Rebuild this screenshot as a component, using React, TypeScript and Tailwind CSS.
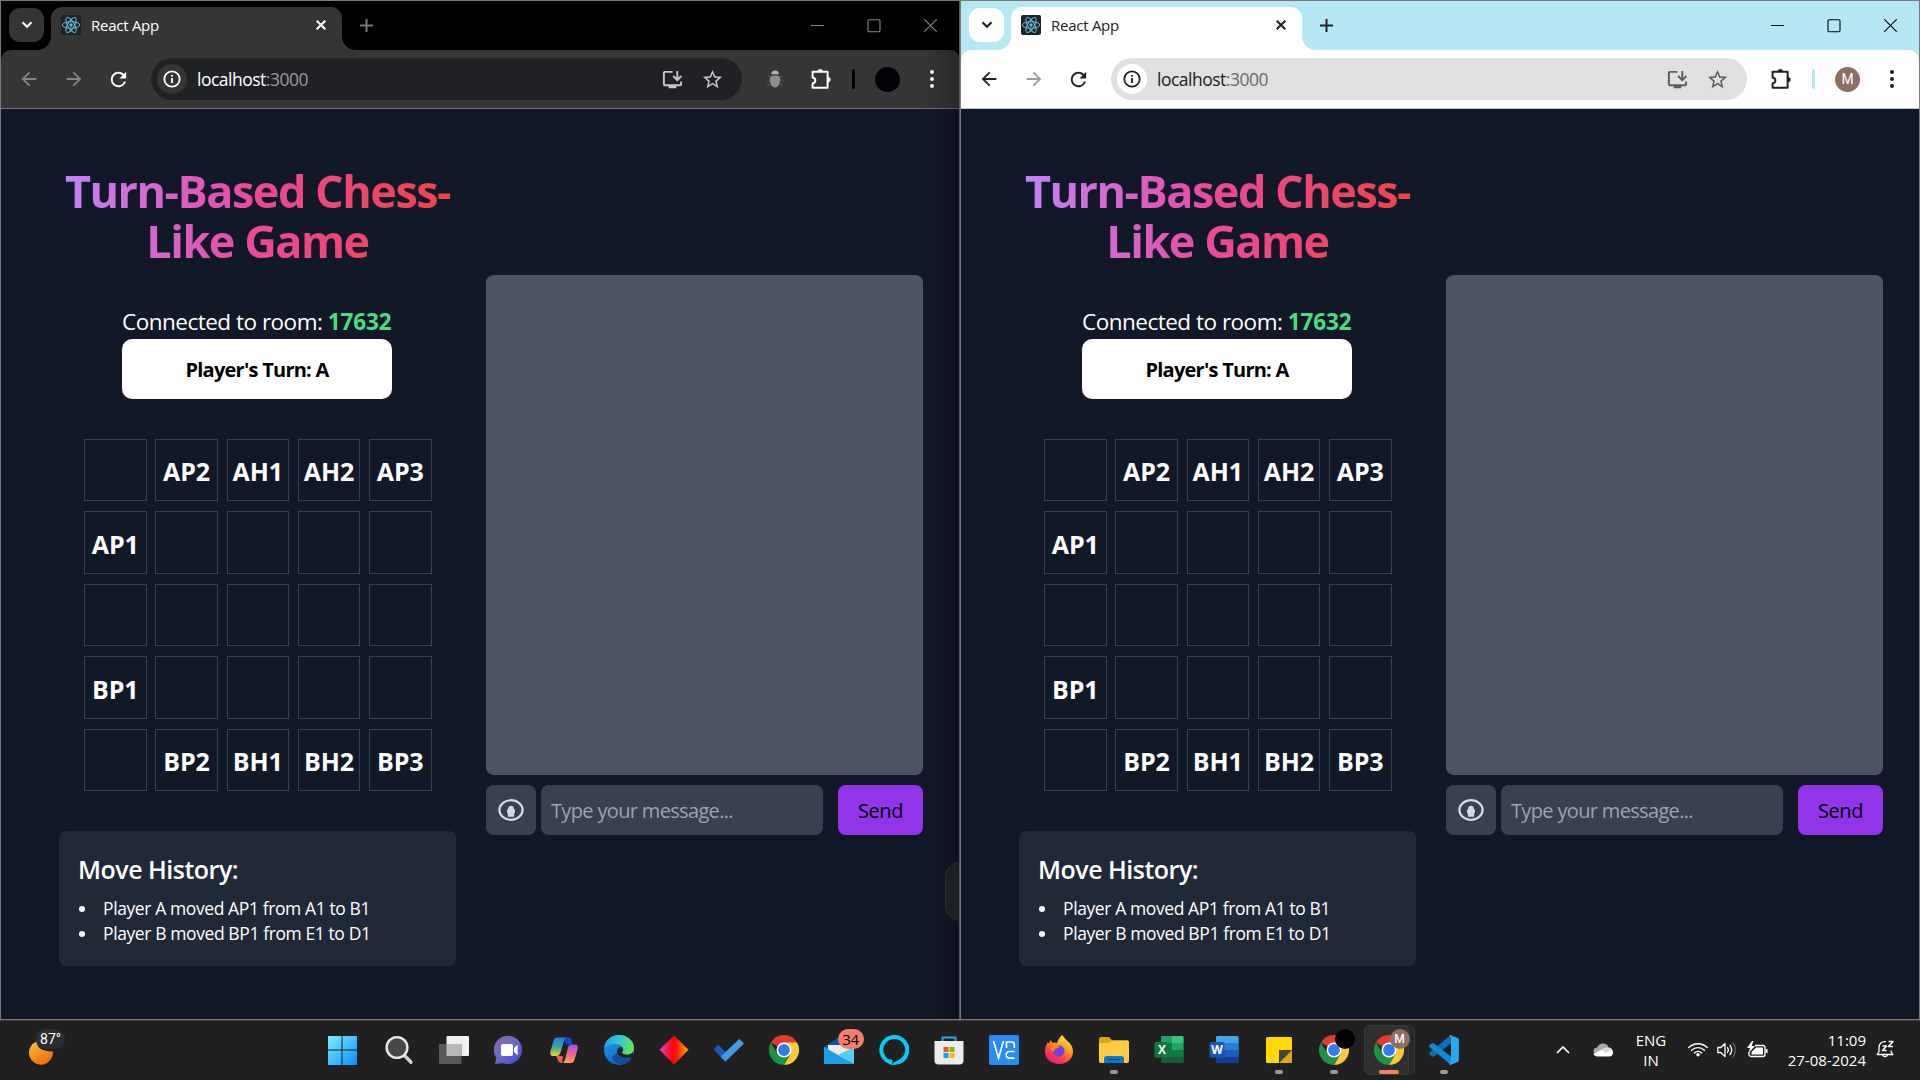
import React from "react";
import { MdInstallDesktop, MdStarBorder, MdRefresh, MdArrowBack, MdArrowForward } from "react-icons/md";

type Theme = "dark" | "light";

/* ---------- browser chrome ---------- */

function ReactLogo() {
  return (
    <svg viewBox="0 0 20 20" className="h-5 w-5 shrink-0">
      <rect width="20" height="20" rx="2" fill="#20232a" />
      <g fill="none" stroke="#61c5dd" strokeWidth="0.95">
        <ellipse cx="10" cy="10" rx="8.6" ry="3.3" />
        <ellipse cx="10" cy="10" rx="8.6" ry="3.3" transform="rotate(60 10 10)" />
        <ellipse cx="10" cy="10" rx="8.6" ry="3.3" transform="rotate(120 10 10)" />
      </g>
      <circle cx="10" cy="10" r="1.7" fill="#61c5dd" />
    </svg>
  );
}

function PuzzleIcon() {
  return (
    <svg viewBox="0 0 24 24" className="h-6 w-6">
      <path
        d="M4.6 4.8h15v16H4.6v-4.3c3.4-.6 3.9-5.2 0-6z"
        fill="none"
        stroke="currentColor"
        strokeWidth="2"
        strokeLinejoin="round"
      />
      <path d="M9.6 4.5a2.6 2.6 0 0 1 5.2 0zM20 9.9a2.6 2.6 0 0 1 0 5.2z" fill="currentColor" />
    </svg>
  );
}

function BugIcon() {
  return (
    <svg viewBox="0 0 20 20" className="h-5 w-5">
      <g stroke="#505050" strokeWidth="1.2" fill="none">
        <path d="M5 8 2.5 6.5M5 12H1.5M5 15l-2.5 2M15 8l2.5-1.5M15 12h3.5M15 15l2.500 2" />
      </g>
      <path d="M6.400 5.200a3.700 3.700 0 0 1 7.400 0z" fill="#b5b5b5" />
      <path d="M4.800 9.500C4.800 7.200 7 6.500 10 6.500s5.300.7 5.300 3c0 5-2 9-5.300 9s-5.200-4-5.200-9z" fill="#8e8e8e" />
    </svg>
  );
}

function Flare({ side, className }: { side: "left" | "right"; className: string }) {
  return (
    <svg
      viewBox="0 0 14 14"
      className={`absolute bottom-0 h-3.5 w-3.5 ${side === "left" ? "-left-3.5" : "-right-3.5"} ${className}`}
    >
      <path d={side === "left" ? "M14 0v14H0C8 14 14 8 14 0z" : "M0 0v14h14C6 14 0 8 0 0z"} fill="currentColor" />
    </svg>
  );
}

function TabStrip({ theme }: { theme: Theme }) {
  const dark = theme === "dark";
  const surface = dark ? "bg-[#353535]" : "bg-white";
  const surfaceText = dark ? "text-[#353535]" : "text-white";
  return (
    <div className={`flex h-[49px] shrink-0 ${dark ? "bg-black" : "bg-[#b6e8f3]"}`}>
      <div className={`mt-[7px] ml-2 flex h-[34px] w-[35px] items-center justify-center rounded-[11px] ${surface}`}>
        <svg viewBox="0 0 12 8" className={`h-2 w-3 ${dark ? "text-white" : "text-[#202124]"}`}>
          <path d="M1.5 1.2 6 5.7l4.5-4.5" fill="none" stroke="currentColor" strokeWidth="2.2" />
        </svg>
      </div>
      <div className={`relative mt-1.5 ml-[7px] flex w-[291px] items-center rounded-t-[11px] pr-4 pb-[7px] pl-2.5 ${surface}`}>
        <Flare side="left" className={surfaceText} />
        <Flare side="right" className={surfaceText} />
        <ReactLogo />
        <span className={`ml-2.5 flex-1 text-[15px] leading-5 tracking-[-0.26px] ${dark ? "text-white" : "text-[#202124]"}`}>
          React App
        </span>
        <svg viewBox="0 0 10 10" className={`h-2.5 w-2.5 ${dark ? "text-white" : "text-[#202124]"}`}>
          <path d="m.7.7 8.6 8.6m0-8.6L.7 9.3" stroke="currentColor" strokeWidth="2" />
        </svg>
      </div>
      <svg
        viewBox="0 0 13 13"
        className={`mt-[18px] ml-[18px] h-[13px] w-[13px] ${dark ? "text-[#777777]" : "text-[#202124]"}`}
      >
        <path d="M6.5 0v13M0 6.5h13" stroke="currentColor" strokeWidth="2" />
      </svg>
      <div className={`mt-[18px] ml-auto flex gap-[43px] ${dark ? "mr-[23px] text-[#8a8a8a]" : "mr-[22px] text-black"}`}>
        <svg viewBox="0 0 13 13" className="h-[13px] w-[13px]">
          <path d="M0 6.5h13" stroke="currentColor" strokeWidth="1" />
        </svg>
        <svg viewBox="0 0 14 14" className="h-3.5 w-3.5">
          <rect x="1" y="0.8" width="12" height="12" rx="1.2" fill="none" stroke="currentColor" strokeWidth="1.1" />
        </svg>
        <svg viewBox="0 0 13 13" className="h-[13px] w-[13px]">
          <path d="m.3.3 12.4 12.4m0-12.4L.3 12.7" stroke="currentColor" strokeWidth="1.1" />
        </svg>
      </div>
    </div>
  );
}

function Toolbar({ theme }: { theme: Theme }) {
  const dark = theme === "dark";
  const ink = dark ? "text-white" : "text-[#202124]";
  return (
    <div className={`shrink-0 ${dark ? "bg-black" : "bg-[#b6e8f3]"}`}>
      <div
        className={`flex h-[59px] items-center rounded-t-[10px] border-b pl-[17px] ${
          dark ? "border-[#747474] bg-[#353535] pr-[18px]" : "border-[#b9c3c5] bg-white pr-[17px]"
        }`}
      >
        <MdArrowBack className={`h-[22px] w-[22px] ${dark ? "text-[#868686]" : "text-[#202124]"}`} />
        <MdArrowForward className={`ml-[23px] h-[22px] w-[22px] ${dark ? "text-[#868686]" : "text-[#9b9b9b]"}`} />
        <MdRefresh className={`ml-[22px] h-[23px] w-[23px] ${ink}`} />
        <div
          className={`ml-[21px] flex h-[42px] items-center rounded-full pr-[18px] pl-[6px] ${
            dark ? "w-[591px] bg-[#202124]" : "w-[636px] bg-[#e0e0e0]"
          }`}
        >
          <div className={`flex h-[30px] w-[30px] items-center justify-center rounded-full ${dark ? "bg-[#353535]" : "bg-white"}`}>
            <svg viewBox="0 0 18 18" className={`h-[18px] w-[18px] ${ink}`}>
              <circle cx="9" cy="9" r="7.7" fill="none" stroke="currentColor" strokeWidth="1.8" />
              <path d="M9 8v5M9 5v1.7" stroke="currentColor" strokeWidth="1.8" />
            </svg>
          </div>
          <span
            className={`ml-2.5 flex-1 text-[17.5px] leading-6 tracking-[-0.5px] ${
              dark ? "text-[#9a9b9d]" : "text-[#6a6a6a]"
            }`}
          >
            <span className={ink}>localhost</span>:3000
          </span>
          <MdInstallDesktop className={`h-[23px] w-[23px] ${dark ? "text-[#c7c7c7]" : "text-[#5b5d60]"}`} />
          <MdStarBorder className={`ml-[17px] h-[23px] w-[23px] ${dark ? "text-[#c7c7c7]" : "text-[#5b5d60]"}`} />
        </div>
        <div className={`ml-auto flex items-center ${ink}`}>
          {dark && (
            <span className="mr-[23px]">
              <BugIcon />
            </span>
          )}
          <PuzzleIcon />
          <span className={`ml-5 h-5 w-[3px] rounded-full ${dark ? "bg-black" : "bg-[#b6e8f3]"}`} />
          <span
            className={`ml-5 flex h-[25px] w-[25px] items-center justify-center rounded-full font-[Roboto] text-sm text-white ${
              dark ? "bg-[#040007]" : "bg-[#8d6e63]"
            }`}
          >
            {dark ? "" : "M"}
          </span>
          <svg viewBox="0 0 20 20" className="ml-[22px] h-5 w-5">
            <circle cx="10" cy="3" r="2" fill="currentColor" />
            <circle cx="10" cy="10" r="2" fill="currentColor" />
            <circle cx="10" cy="17" r="2" fill="currentColor" />
          </svg>
        </div>
      </div>
    </div>
  );
}

/* ---------- game page ---------- */

const board = [
  ["", "AP2", "AH1", "AH2", "AP3"],
  ["AP1", "", "", "", ""],
  ["", "", "", "", ""],
  ["BP1", "", "", "", ""],
  ["", "BP2", "BH1", "BH2", "BP3"],
];

const moves = ["Player A moved AP1 from A1 to B1", "Player B moved BP1 from E1 to D1"];

function GamePanel() {
  return (
    <div className="w-[397px]">
      <h1 className="bg-[linear-gradient(to_right,#c084fc,#ec4899,#ef4444)] bg-clip-text pt-[2px] text-center text-[45px] leading-[50px] font-bold tracking-[-1.5px] text-transparent">
        Turn-Based Chess-
        <br />
        Like Game
      </h1>
      <div className="mt-[38px] ml-[63px] w-[270px]">
        <p className="text-[22.5px] leading-[35px] tracking-[-0.5px] whitespace-nowrap text-white">
          Connected to room: <span className="font-bold tracking-[-0.12px] text-[#4ade80]">17632</span>
        </p>
        <div className="flex h-[60px] items-center justify-center rounded-[10px] bg-white pt-[2px] text-xl font-bold tracking-[-0.75px] text-black">
          Player's Turn: A
        </div>
      </div>
      <div className="mt-[39.75px] ml-[25px] grid w-max grid-cols-5 gap-x-[8.75px] gap-y-2.5">
        {board.flat().map((piece, i) => (
          <div
            key={i}
            className="flex h-[62.5px] w-[62.5px] items-center justify-center border border-[#374151] pt-[3px] text-[25px] leading-[35px] font-bold tracking-[-0.1px] text-white"
          >
            {piece}
          </div>
        ))}
      </div>
      <div className="mt-10 h-[135px] rounded-[7.5px] bg-[#1f2937] pt-5 pl-[19px] text-white">
        <h2 className="text-[25px] leading-[37px] font-semibold tracking-[-0.5px]">Move History:</h2>
        <ul className="mt-2 ml-px">
          {moves.map((move) => (
            <li key={move} className="flex items-center text-[17.5px] leading-[25px] tracking-[-0.4px]">
              <span className="mr-[18px] h-1.5 w-1.5 rounded-full bg-white" />
              {move}
            </li>
          ))}
        </ul>
      </div>
    </div>
  );
}

function ChatPanel() {
  return (
    <div className="mt-[111px] w-[437px]">
      <div className="h-[500px] rounded-[7.5px] bg-[#4b5563]" />
      <div className="mt-2.5 flex h-[50px]">
        <div className="flex w-[50px] items-center justify-center rounded-[7.5px] bg-[#374151]">
          <svg viewBox="0 0 26 22" className="h-[22px] w-[26px]">
            <ellipse cx="13" cy="11" rx="11.6" ry="9.8" fill="none" stroke="#d6dae0" strokeWidth="2.2" />
            <path
              d="M13 6.8c1.7 0 2.7 1.3 2.9 2.9 1 .8 1.4 2 1.1 3.2-.2.9-.8 1.4-.9 2.2v2.7h-6.2v-2.7c-.1-.8-.7-1.3-.9-2.2-.3-1.2.1-2.4 1.1-3.2.2-1.6 1.2-2.9 2.9-2.9z"
              fill="#d6dae0"
            />
          </svg>
        </div>
        <div className="ml-[5px] flex w-[282px] items-center rounded-[7.5px] bg-[#374151] pt-[2px] pl-2.5 text-xl tracking-[-0.66px] text-[#9ca3af]">
          Type your message...
        </div>
        <div className="ml-[15px] flex w-[85px] items-center justify-center rounded-[7.5px] bg-[#9333ea] pt-[2px] text-xl tracking-[-0.45px] text-black shadow-md">
          Send
        </div>
      </div>
    </div>
  );
}

function BrowserWindow({ theme }: { theme: Theme }) {
  const dark = theme === "dark";
  return (
    <div
      className={`relative flex h-[1020px] w-[960px] flex-col overflow-hidden border-t border-b border-l border-[#7a7a7a] ${
        dark ? "" : "border-r"
      }`}
    >
      <TabStrip theme={theme} />
      <Toolbar theme={theme} />
      <div className="flex flex-1 gap-[30px] bg-[#111827] pt-[55px] pl-[58px]">
        <GamePanel />
        <ChatPanel />
      </div>
      {dark && (
        <>
          <div className="absolute right-0 bottom-[98px] h-[59px] w-[15px] rounded-l-[20px] border border-r-0 border-[#33383d] bg-[#22272b]" />
          <div className="absolute top-[49px] right-0 bottom-0 w-9 bg-gradient-to-l from-black/25 to-transparent" />
          <div className="absolute top-0 right-0 bottom-0 w-px bg-[#55585e]" />
        </>
      )}
    </div>
  );
}

/* ---------- taskbar icons ---------- */

function Icon({ children, className = "" }: { children: React.ReactNode; className?: string }) {
  return (
    <svg viewBox="0 0 30 30" className={`h-[30px] w-[30px] ${className}`}>
      {children}
    </svg>
  );
}

function StartIcon() {
  return (
    <Icon className="mr-1">
      <defs>
        <linearGradient id="start" x1="0" y1="0" x2="30" y2="30" gradientUnits="userSpaceOnUse">
          <stop offset="0" stopColor="#82f3fb" />
          <stop offset="1" stopColor="#0a8dfa" />
        </linearGradient>
      </defs>
      <path d="M1 1h13.500v13.500H1zM15.500 1H30v13.500H15.500zM1 15.500h13.500V30H1zM15.500 15.500H30V30H15.500z" fill="url(#start)" />
    </Icon>
  );
}

function SearchIcon() {
  return (
    <Icon className="mr-px">
      <path d="m20 20 7 7.3" stroke="#cfd3d6" strokeWidth="3.4" strokeLinecap="round" />
      <circle cx="13" cy="12.5" r="10.4" fill="#484848" stroke="#e6eaec" strokeWidth="2.4" />
    </Icon>
  );
}

function TaskViewIcon() {
  return (
    <Icon>
      <rect x="7.5" y="1" width="22.5" height="20" rx="1" fill="#f0f0f0" />
      <rect x="0" y="9" width="22.5" height="20" rx="1" fill="#595959" />
      <path d="M7.500 9h15v12h-15z" fill="#b9b9b9" />
    </Icon>
  );
}

function ChatIcon() {
  return (
    <Icon>
      <defs>
        <linearGradient id="chat" x1="0.1" y1="0.1" x2="0.8" y2="0.9">
          <stop offset="0" stopColor="#8a66a8" />
          <stop offset="0.45" stopColor="#6c6cc8" />
          <stop offset="1" stopColor="#4f4fd0" />
        </linearGradient>
      </defs>
      <path d="M15 .7A14.200 14.200 0 1 1 9 28.200L1 29l1.300-6.200A14.200 14.200 0 0 1 15 .7z" fill="url(#chat)" />
      <rect x="7" y="9" width="12" height="12" rx="1.800" fill="#fff" />
      <path d="m20 13 3.600-3.200v10.400L20 17z" fill="#fff" />
    </Icon>
  );
}

function CopilotIcon() {
  return (
    <Icon>
      <defs>
        <linearGradient id="cpA" x1="0" y1="0" x2="0" y2="1">
          <stop offset="0" stopColor="#1f7fe0" />
          <stop offset="0.5" stopColor="#35a9a0" />
          <stop offset="1" stopColor="#e8d322" />
        </linearGradient>
        <linearGradient id="cpB" x1="0" y1="0" x2="0" y2="1">
          <stop offset="0" stopColor="#a04df0" />
          <stop offset="0.5" stopColor="#ee5f91" />
          <stop offset="1" stopColor="#ffa24f" />
        </linearGradient>
      </defs>
      <path d="M14 2.500h5.500c2 0 2.500 1.500 3 3l1.200 4H17z" fill="#1747c4" />
      <path d="M7 21h7l-1 7c-2 0-3.500-.8-4.200-3z" fill="#f2603c" />
      <path d="M8 2.500h10.500c-2 0-2.800 1.300-3.300 3L11.300 18c-.6 2-1.800 3-3.800 3H4.300C1.500 21 .7 19 1.400 16.500L4.500 6C5.200 3.700 6 2.500 8 2.500z" fill="url(#cpA)" />
      <path d="M22 28H12.500c2 0 2.800-1.300 3.300-3L19 12.500c.6-2 1.800-3 3.800-3h2.900c2.800 0 3.600 2 2.900 4.500l-3 10.500C24.800 26.800 24 28 22 28z" fill="url(#cpB)" />
    </Icon>
  );
}

function EdgeIcon() {
  return (
    <Icon>
      <defs>
        <linearGradient id="edgeTop" x1="0" y1="0.3" x2="1" y2="0.6">
          <stop offset="0" stopColor="#1fa4e8" />
          <stop offset="0.5" stopColor="#35c8cf" />
          <stop offset="1" stopColor="#6be34f" />
        </linearGradient>
        <linearGradient id="edgeBody" x1="0" y1="0" x2="0.4" y2="1">
          <stop offset="0" stopColor="#1fa7e6" />
          <stop offset="1" stopColor="#0b66d0" />
        </linearGradient>
      </defs>
      <circle cx="15" cy="15" r="15" fill="url(#edgeBody)" />
      <path d="M8 22c1 5 7 8 12 7.200 3.500-.7 6.500-3.500 8-6.200.3-.6-.2-1-.8-.6-5 2.500-13 1-14.200-5z" fill="#114b9a" />
      <path d="M0 13C1 5 7.500 0 15 0c8.500 0 15 6 15 12.500 0 4.200-3 7.300-7 7.300-3 0-5-1-5-2.200 0-.8 1.200-1.200 1.200-3.200 0-2.600-3-5.400-7.500-5.400C6.500 9 2 11 0 13z" fill="url(#edgeTop)" />
      <path d="M18 17.600c0 1.200 2 2.200 5 2.200 2.500 0 4.300-.8 5.400-2.200L31 24l-6-1.500c-6 1.500-12-1.500-12-6 0-2 1.200-4.200 3.400-4.600 1.800 0 2.800 1 2.800 2.500 0 2-1.200 2.400-1.200 3.200z" fill="#202020" />
    </Icon>
  );
}

function DiamondIcon() {
  return (
    <Icon>
      <defs>
        <linearGradient id="diamond" x1="0" y1="0" x2="1" y2="0">
          <stop offset="0" stopColor="#f33bd0" />
          <stop offset="0.45" stopColor="#fb0505" />
          <stop offset="0.6" stopColor="#fb1a05" />
          <stop offset="1" stopColor="#ffb300" />
        </linearGradient>
      </defs>
      <path d="m15 .5 14.500 14.300L15 29.500.5 14.800z" fill="url(#diamond)" />
    </Icon>
  );
}

function TodoIcon() {
  return (
    <Icon>
      <path d="m0 14.500 4.200-4.300 11 11-4.300 4.300z" fill="#1f56b8" stroke="#1f56b8" strokeLinejoin="round" />
      <path d="M25.500 4.300 29.500 8.600 11.500 26 7 21.700z" fill="#3f9bea" stroke="#3f9bea" strokeLinejoin="round" />
    </Icon>
  );
}

function ChromeIcon() {
  return (
    <Icon>
      <path d="M15 15 2 7.500A15 15 0 0 1 28 7.500z" fill="#e33b2e" />
      <path d="M15 15V7.500h13A15 15 0 0 1 15 30l6.500-11.200z" fill="#fcc934" />
      <path d="M15 15l6.500 3.800L15 30A15 15 0 0 1 2 7.500l6.500 11.300z" fill="#1e9143" />
      <circle cx="15" cy="15" r="7.500" fill="#fff" />
      <circle cx="15" cy="15" r="5.900" fill="#2f7cf0" />
    </Icon>
  );
}

function MailIcon() {
  return (
    <Icon>
      <path d="M0 12 15 2l15 10v4H0z" fill="#0a57a5" />
      <path d="M4 10h22v10H4z" fill="#ececec" />
      <path d="M0 12v17h30z" fill="#2aa7e6" />
      <path d="M30 12v17L13 20.500z" fill="#4fd1f7" />
      <path d="M0 12v17h30L15 21z" fill="#219be2" />
    </Icon>
  );
}

function AlexaIcon() {
  return (
    <Icon>
      <path d="M12.800 27.500A12.900 12.900 0 1 1 19 27.200" fill="none" stroke="#05cbfb" strokeWidth="4" />
      <path d="M13.500 30v-3.600c0-1.200-.7-1.800-2-2.300L9 26l1.500 3.300zM13.500 30c7 0 12-3 15-8l-4.500-1c-2 3.500-5.500 5-9 6z" fill="#05cbfb" />
    </Icon>
  );
}

function StoreIcon() {
  return (
    <Icon>
      <path d="M8.500 8V2.500h13V8" fill="none" stroke="#2ba6e6" strokeWidth="2" />
      <path d="M.5 6h29v19.500a4 4 0 0 1-4 4h-21a4 4 0 0 1-4-4z" fill="#ececec" />
      <path d="M9.500 12H14.500V17H9.500z" fill="#f25022" />
      <path d="M15.500 12H20.500V17H15.500z" fill="#7fba00" />
      <path d="M9.500 18H14.500V23H9.500z" fill="#00a4ef" />
      <path d="M15.500 18H20.500V23H15.500z" fill="#ffb900" />
    </Icon>
  );
}

function VncIcon() {
  return (
    <Icon>
      <rect width="30" height="30" rx="2" fill="#278cf4" />
      <g fill="none" stroke="#fff" strokeWidth="1.700">
        <path d="M4.500 6 9.500 23 14.500 6" />
        <path d="M17.500 13V7h5c2 0 2.800 1 2.800 2.600V13" />
        <path d="M25.500 16.500h-5a3.200 3.200 0 0 0 0 6.700h5" />
      </g>
    </Icon>
  );
}

function FirefoxIcon() {
  return (
    <Icon>
      <defs>
        <linearGradient id="fox" x1="0.8" y1="0" x2="0.2" y2="1">
          <stop offset="0" stopColor="#fff04a" />
          <stop offset="0.4" stopColor="#ff9a1f" />
          <stop offset="0.7" stopColor="#ff3b4c" />
          <stop offset="1" stopColor="#e31587" />
        </linearGradient>
      </defs>
      <path d="M18 0c2 2 3 4 5.500 6 3 2.500 5.500 6 5.500 10.500C29 24 23 29 15.500 29 7 29 1 24 1 16.500c0-4 1-7 3-9.500l.8 2L6.500 5l2 3c2-.7 3.500-.4 4.500 0C14 5 15.500 2.500 18 0z" fill="url(#fox)" />
      <circle cx="14.800" cy="16" r="5.800" fill="#7542e5" />
      <path d="M6 11c3-1.500 8-1.500 10 1-2 0-2.500 1.500-4.500 1.700-1.500.2-1.500 2-.5 3.300-3-1-5.500-3-5-6z" fill="#ff8a16" />
    </Icon>
  );
}

function ExplorerIcon() {
  return (
    <Icon>
      <path d="M0 4a2 2 0 0 1 2-2h8l3.500 3.500H28a2 2 0 0 1 2 2V12H0z" fill="#e2a30c" />
      <path d="M0 8h10l3-2.500h15.500A1.500 1.500 0 0 1 30 7v19a2 2 0 0 1-2 2H2a2 2 0 0 1-2-2z" fill="#fdcb44" />
      <path d="M5 28v-4a3 3 0 0 1 3-3h14a3 3 0 0 1 3 3v4z" fill="#0f79d2" />
      <path d="M9 24.500h12" stroke="#0a4c93" strokeWidth="1.200" />
    </Icon>
  );
}

function OfficeIcon({ letter }: { letter: "X" | "W" }) {
  const c =
    letter === "X"
      ? ["#21a366", "#33c481", "#107c41", "#21a366", "#185c37", "#107c41"]
      : ["#41a5ee", "#41a5ee", "#2b7cd3", "#2b7cd3", "#103f91", "#1a5dbe"];
  return (
    <div className="relative h-[30px] w-[30px]">
      <Icon>
        <rect x="7" y="1" width="22.500" height="27" rx="1.500" fill={c[2]} />
        <path d="M7 2.500A1.500 1.500 0 0 1 8.500 1H18v7H7z" fill={c[0]} />
        <path d="M18 1h10a1.500 1.500 0 0 1 1.500 1.500V8H18z" fill={c[1]} />
        <path d="M18 8h11.500v7H18z" fill={c[3]} />
        <path d="M7 21.500h22.500v5A1.500 1.500 0 0 1 28 28H8.500A1.500 1.500 0 0 1 7 26.500z" fill={c[4]} />
        <path d="M7 15h22.500v6.500H7z" fill={c[5]} />
        <rect x="0.500" y="7" width="15" height="15.500" rx="1.500" fill={letter === "X" ? "#0f7a40" : "#1a56b8"} />
      </Icon>
      <span className="absolute top-[7px] left-[0.5px] w-[15px] text-center text-[12px] leading-4 font-bold text-white">
        {letter}
      </span>
    </div>
  );
}

function StickyIcon() {
  return (
    <Icon>
      <path d="M2 3.500A1.500 1.500 0 0 1 3.500 2h23A1.500 1.500 0 0 1 28 3.500V15L15 28H3.500A1.500 1.500 0 0 1 2 26.500z" fill="#ffd900" />
      <path d="M28 15v12a1 1 0 0 1-1 1H15z" fill="#e2a90a" />
      <path d="M15 15h13L15 28z" fill="#434343" />
    </Icon>
  );
}

function VsCodeIcon() {
  return (
    <Icon>
      <path d="M22 0v8.500L4.500 21.800 2.800 21.500.3 19.300v-1.500z" fill="#0b6fb8" />
      <path d="M.3 10.500 2.800 8.200l1.800.1L22 21.500V30L.3 12z" fill="#1389d4" />
      <path d="M21.500 0 29 3.200a1.500 1.500 0 0 1 .9 1.400v20.800a1.500 1.500 0 0 1-.9 1.400L21.500 30c-.8 0-1-.3-1.500-1l2-1.500v-25L20 1c.5-.7.800-1 1.500-1z" fill="#2aa6f2" />
    </Icon>
  );
}

function TaskItem({ children, running }: { children: React.ReactNode; running?: boolean }) {
  return (
    <div className="relative flex h-[50px] w-[55px] items-center justify-center">
      {children}
      {running && <span className="absolute bottom-[1px] h-1 w-2 rounded-full bg-[#9a9a9a]" />}
    </div>
  );
}

function Taskbar() {
  return (
    <div className="flex h-[60px] items-center border-t border-[#3c3c3c] bg-[#202020] pb-px text-white">
      <div className="flex h-full w-[316.500px] items-center pl-[29px]">
        <div className="relative h-9 w-9">
          <svg viewBox="0 0 24 24" className="absolute top-[9px] left-0 h-6 w-6">
            <defs>
              <linearGradient id="moon" x1="0.1" y1="0" x2="0.7" y2="1">
                <stop offset="0" stopColor="#f6c033" />
                <stop offset="1" stopColor="#f0690f" />
              </linearGradient>
            </defs>
            <path d="M7.500.6C8 6.500 12 10.500 23.900 10.500A12 12 0 1 1 7.500.6z" fill="url(#moon)" />
          </svg>
          <span className="absolute top-[-3px] left-[7px] flex h-5 w-[29px] items-center justify-center rounded-full bg-[#2d2d2d] font-[Roboto] text-sm">
            87°
          </span>
        </div>
      </div>
      <div className="flex items-center">
        <TaskItem><StartIcon /></TaskItem>
        <TaskItem><SearchIcon /></TaskItem>
        <TaskItem><TaskViewIcon /></TaskItem>
        <TaskItem><ChatIcon /></TaskItem>
        <TaskItem><CopilotIcon /></TaskItem>
        <TaskItem><EdgeIcon /></TaskItem>
        <TaskItem><DiamondIcon /></TaskItem>
        <TaskItem><TodoIcon /></TaskItem>
        <TaskItem><ChromeIcon /></TaskItem>
        <TaskItem>
          <MailIcon />
          <span className="absolute top-1 left-[26px] flex h-5 w-[26px] items-center justify-center rounded-full bg-[#f4806a] text-[15px] tracking-[-0.3px] text-black">
            34
          </span>
        </TaskItem>
        <TaskItem><AlexaIcon /></TaskItem>
        <TaskItem><StoreIcon /></TaskItem>
        <TaskItem><VncIcon /></TaskItem>
        <TaskItem><FirefoxIcon /></TaskItem>
        <TaskItem running><ExplorerIcon /></TaskItem>
        <TaskItem><OfficeIcon letter="X" /></TaskItem>
        <TaskItem><OfficeIcon letter="W" /></TaskItem>
        <TaskItem running><StickyIcon /></TaskItem>
        <TaskItem running>
          <ChromeIcon />
          <span className="absolute top-1 left-[28.500px] h-5 w-5 rounded-full bg-[#040007]" />
        </TaskItem>
        <TaskItem>
          <span className="absolute top-0 left-[7px] h-[50px] w-[46px] rounded-md border border-[#353535] bg-[#292929]" />
          <span className="absolute top-0 left-[2px] h-[50px] w-[45px] rounded-md border border-[#3a3a3a] bg-[#2f2f2f]" />
          <span className="relative"><ChromeIcon /></span>
          <span className="absolute top-1 left-[28px] flex h-5 w-5 items-center justify-center rounded-full bg-[#8d6e63] font-[Roboto] text-xs font-medium">
            M
          </span>
          <span className="absolute bottom-[1px] h-1 w-5 rounded-full bg-[#f4806a]" />
        </TaskItem>
        <TaskItem running><VsCodeIcon /></TaskItem>
      </div>
      <div className="ml-auto flex h-full items-center pr-[25px] pb-px text-[15px] leading-5">
        <svg viewBox="0 0 14 8" className="h-2 w-3.5">
          <path d="m1 7 6-6 6 6" fill="none" stroke="#fff" strokeWidth="1.700" />
        </svg>
        <svg viewBox="0 0 20 14" className="ml-[23px] h-3.5 w-5">
          <path d="M3.500 12A4 4 0 0 1 2 5c1 0 2-.5 2.500-1C6 1 8.500.3 10.500.5 13.500.8 15 2.500 15.500 4.500L10 9z" fill="#a9a9a9" />
          <path d="M15 4.500c3 .2 5 2 5 5a4 4 0 0 1-4 4H4.500C2.500 13.500 1 12.500.3 11L9 6.500c2-1.300 4-2 6-2z" fill="#fff" />
          <path d="M15 4.500c1.800.1 3.300.8 4.200 2L13 10 8.500 6.700c2-1.400 4.500-2.200 6.500-2.200z" fill="#d8d8d8" />
        </svg>
        <div className="ml-[23px] flex w-[30px] flex-col items-center">
          <span>ENG</span>
          <span>IN</span>
        </div>
        <svg viewBox="0 0 20 15" className="ml-[22px] h-[15px] w-5">
          <g fill="none" stroke="#fff" strokeWidth="1.400" strokeLinecap="round">
            <path d="M.8 5.500a13 13 0 0 1 18.400 0M3.600 8.300a9 9 0 0 1 12.800 0M6.400 11a5.200 5.200 0 0 1 7.200 0" />
          </g>
          <circle cx="10" cy="12.800" r="1.700" fill="#fff" />
        </svg>
        <svg viewBox="0 0 20 16" className="ml-[9px] h-4 w-5">
          <g fill="none" stroke="#fff" strokeWidth="1.300" strokeLinejoin="round" strokeLinecap="round">
            <path d="M.8 5.500h3L8 1.500v13l-4.200-4h-3z" />
            <path d="M10.500 5.500c1 1.500 1 3.500 0 5M13 3.300c2 2.800 2 6.600 0 9.400" />
            <path d="M16 1c3 4 3 10 0 14" stroke="#666" />
          </g>
        </svg>
        <svg viewBox="0 0 21 18" className="ml-[10px] h-[18px] w-[21px]">
          <path d="M8 4.500h8a2 2 0 0 1 2 2v7a2 2 0 0 1-2 2H4a2 2 0 0 1-2-2V11" fill="none" stroke="#fff" strokeWidth="1.300" />
          <path d="M9 6.500h7v7H4.500V11zM18.800 8h1.700v4h-1.700z" fill="#fff" />
          <path d="M5 0 0 7h3L1.500 12 8 5H4.500L6.500 0z" fill="#fff" />
        </svg>
        <div className="ml-[19px] flex w-[79px] flex-col items-end">
          <span>11:09</span>
          <span>27-08-2024</span>
        </div>
        <svg viewBox="0 0 19 19" className="ml-[10px] h-[19px] w-[19px]">
          <g fill="none" stroke="#fff" strokeWidth="1.300" strokeLinejoin="round">
            <path d="M10 1.700C5.500 1 3 4 3 7.500v4L1.200 14.500h15.600L15.200 12v-1.500M6.500 15a2.700 2.700 0 0 0 5 0" />
            <path d="M6.500 6h4l-4 4.500h4M12.500 1.500h4.500L12.500 6.500h4.500" strokeWidth="1.600" />
          </g>
        </svg>
      </div>
    </div>
  );
}

export default function App() {
  return (
    <div className="h-[1080px] w-[1920px] overflow-hidden bg-[#202020] font-['Open_Sans','Noto_Sans',sans-serif]">
      <div className="flex h-[1020px]">
        <BrowserWindow theme="dark" />
        <BrowserWindow theme="light" />
      </div>
      <Taskbar />
    </div>
  );
}
